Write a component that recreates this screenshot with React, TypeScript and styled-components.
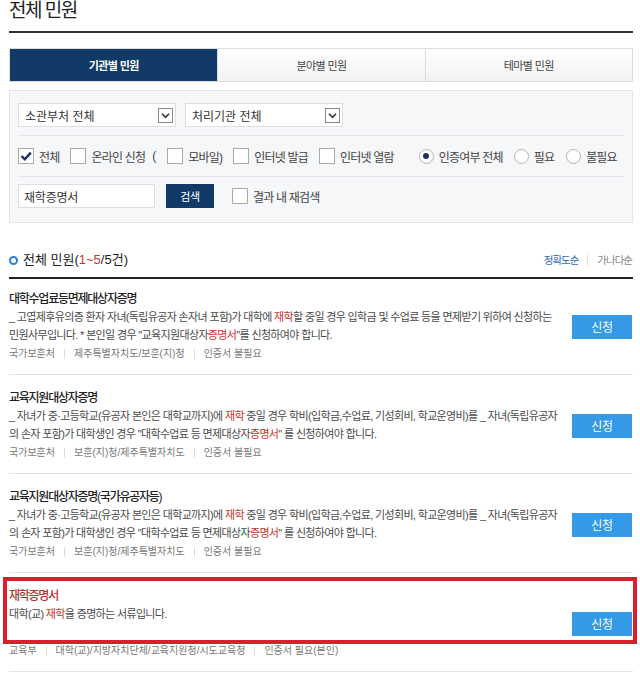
import React from 'react';
import styled, { createGlobalStyle } from 'styled-components';

const GlobalStyle = createGlobalStyle`
  html, body { margin: 0; padding: 0; background: #fff; }
  body { font-family: "Liberation Sans", "Noto Sans CJK KR", sans-serif; color: #333; }
  * { box-sizing: border-box; }
  ul { list-style: none; margin: 0; padding: 0; }
`;

const Page = styled.div`
  width: 624px;
  margin-left: 9px;
`;

const PageTitle = styled.h1`
  margin: 0;
  height: 33px;
  font-size: 19px;
  font-weight: 400;
  line-height: 21px;
  letter-spacing: -1.5px;
  color: #222;
  border-bottom: 2px solid #333;
`;

const Tabs = styled.div`
  margin-top: 15px;
  display: grid;
  grid-template-columns: repeat(3, 1fr);
  height: 34px;
  border: 1px solid #dcdcdc;
`;

const Tab = styled.div<{ $active?: boolean }>`
  display: flex;
  align-items: center;
  justify-content: center;
  font-size: 11px;
  letter-spacing: -0.6px;
  font-weight: ${(p) => (p.$active ? 700 : 400)};
  color: ${(p) => (p.$active ? '#fff' : '#444')};
  background: ${(p) => (p.$active ? '#113b66' : 'linear-gradient(#ffffff, #f2f2f2)')};
  & + & { border-left: 1px solid #dcdcdc; }
`;

const FilterBox = styled.div`
  margin-top: 8px;
  background: #f6f7f9;
  border: 1px solid #e3e5e8;
  padding: 0 8px;
`;

const FilterRow = styled.div<{ $pad: string; $height?: number }>`
  display: flex;
  align-items: center;
  padding: ${(p) => p.$pad};
  height: ${(p) => (p.$height ? `${p.$height}px` : 'auto')};
  & + & { border-top: 1px solid #e3e5e8; }
`;

const Select = styled.div`
  width: 158px;
  height: 24px;
  background: #fff;
  border: 1px solid #dedede;
  display: flex;
  align-items: center;
  justify-content: space-between;
  padding: 0 2px 0 6px;
  font-size: 12px;
  letter-spacing: 0;
  color: #333;
  & + & { margin-left: 9px; }
`;

const SelectArrow = styled.span`
  width: 15px;
  height: 15px;
  border: 1px solid #8a8a8a;
  background: #fff;
  display: flex;
  align-items: center;
  justify-content: center;
`;

const CheckGroup = styled.div`
  display: flex;
  align-items: center;
  gap: 11px;
`;

const CheckLabel = styled.label<{ $offset?: number }>`
  display: inline-flex;
  align-items: center;
  gap: 5px;
  font-size: 12px;
  letter-spacing: -0.8px;
  color: #444;
  margin-left: ${(p) => p.$offset ?? 0}px;
  white-space: nowrap;
`;

const Paren = styled.span`
  font-size: 12px;
  color: #444;
  margin-left: -4px;
`;

const Box = styled.span`
  width: 16px;
  height: 16px;
  border: 1px solid #a9a9a9;
  background: #fff;
  display: inline-flex;
  align-items: center;
  justify-content: center;
  flex: none;
`;

const Radio = styled.span<{ $on?: boolean }>`
  width: 15px;
  height: 15px;
  border: 1px solid #b3b3b3;
  border-radius: 50%;
  background: #fff;
  display: inline-flex;
  align-items: center;
  justify-content: center;
  flex: none;
  &::after {
    content: '';
    width: 6px;
    height: 6px;
    border-radius: 50%;
    background: ${(p) => (p.$on ? '#1d2d66' : 'transparent')};
  }
`;

const SearchInput = styled.div`
  width: 137px;
  height: 24px;
  background: #fff;
  border: 1px solid #dedede;
  display: flex;
  align-items: center;
  padding-left: 5px;
  font-size: 12px;
  letter-spacing: -0.2px;
  color: #333;
`;

const SearchButton = styled.button`
  margin-left: 11px;
  width: 48px;
  height: 24px;
  border: none;
  background: #113b66;
  color: #fff;
  font-family: inherit;
  font-size: 11px;
  letter-spacing: -0.3px;
  padding: 0;
`;

const SectionHeader = styled.div`
  margin-top: 28px;
  display: flex;
  justify-content: space-between;
  align-items: center;
  line-height: 18px;
  padding-bottom: 8px;
  border-bottom: 2px solid #222;
`;

const SectionTitle = styled.div`
  display: flex;
  align-items: center;
  font-size: 13px;
  letter-spacing: 0;
  color: #222;
`;

const Ring = styled.span`
  width: 9px;
  height: 9px;
  border-radius: 50%;
  border: 2.5px solid #2b7fd4;
  margin-right: 5px;
`;

const Red = styled.span`
  color: #c7352b;
`;

const Sort = styled.div`
  display: flex;
  align-items: center;
  font-size: 10.5px;
  letter-spacing: -1px;
  padding-right: 1px;
`;

const SortLink = styled.span<{ $active?: boolean }>`
  color: ${(p) => (p.$active ? '#2a6cb8' : '#888')};
`;

const Bar = styled.span`
  width: 1px;
  height: 10px;
  background: #dcdcdc;
  margin: 0 9px;
`;

const Item = styled.li`
  position: relative;
  display: grid;
  grid-template-columns: 1fr 60px;
  column-gap: 4px;
  align-items: center;
  padding: 14px 1px 11px 0;
  border-bottom: 1px solid #e3e3e3;
  &:first-child { padding-top: 11px; }
`;

const ItemTitle = styled.div<{ $hit?: boolean }>`
  font-size: 12px;
  font-weight: 500;
  letter-spacing: -1.25px;
  line-height: 18px;
  color: ${(p) => (p.$hit ? '#b3312c' : '#222')};
`;

const Desc = styled.div`
  font-size: 11px;
  letter-spacing: -0.65px;
  line-height: 18px;
  min-height: 36px;
  color: #4a4a4a;
  white-space: pre-line;
`;

const Meta = styled.div`
  margin-top: 1px;
  display: flex;
  align-items: center;
  font-size: 10px;
  letter-spacing: 0;
  line-height: 18px;
  color: #777;
`;

const ApplyButton = styled.button`
  width: 60px;
  height: 24px;
  border: none;
  background: #3499e6;
  color: #fff;
  font-family: inherit;
  font-size: 12px;
  letter-spacing: -0.3px;
  padding: 0;
`;

const Highlight = styled.div`
  position: absolute;
  top: 4px;
  left: -6px;
  right: -4px;
  height: 67px;
  border: 4px solid #d9202a;
  pointer-events: none;
`;

const CheckMark = () => (
  <svg width="14" height="14" viewBox="0 0 14 14">
    <path d="M2.5 7 L5.8 10.3 L11.8 3.6" fill="none" stroke="#1c2f5e" strokeWidth="2.4" />
  </svg>
);

const Chevron = () => (
  <svg width="11" height="11" viewBox="0 0 11 11">
    <path d="M2 3.8 L5.5 7.3 L9 3.8" fill="none" stroke="#333" strokeWidth="1.6" />
  </svg>
);

const Check = ({ label, checked, offset }: { label: string; checked?: boolean; offset?: number }) => (
  <CheckLabel $offset={offset}>
    <Box>{checked && <CheckMark />}</Box>
    {label}
  </CheckLabel>
);

const RadioItem = ({ label, on, offset }: { label: string; on?: boolean; offset?: number }) => (
  <CheckLabel $offset={offset}>
    <Radio $on={on} />
    {label}
  </CheckLabel>
);

const MetaLine = ({ parts }: { parts: string[] }) => (
  <Meta>
    {parts.map((p, i) => (
      <React.Fragment key={i}>
        {i > 0 && <Bar />}
        <span>{p}</span>
      </React.Fragment>
    ))}
  </Meta>
);

const HL = ({ children }: { children: React.ReactNode }) => <Red>{children}</Red>;

const descEdu = (
  <>
    _ 자녀가 중·고등학교(유공자 본인은 대학교까지)에 <HL>재학</HL> 중일 경우 학비(입학금,수업료, 기성회비, 학교운영비)를 _ 자녀(독립유공자{'\n'}의 손자 포함)가 대학생인 경우 "대학수업료 등 면제대상자<HL>증명서</HL>" 를 신청하여야 합니다.
  </>
);

const items = [
  {
    title: '대학수업료등면제대상자증명',
    desc: (
      <>
        _ 고엽제후유의증 환자 자녀(독립유공자 손자녀 포함)가 대학에 <HL>재학</HL>할 중일 경우 입학금 및 수업료 등을 면제받기 위하여 신청하는{'\n'}민원사무입니다. * 본인일 경우 "교육지원대상자<HL>증명서</HL>"를 신청하여야 합니다.
      </>
    ),
    meta: ['국가보훈처', '제주특별자치도/보훈(지)청', '인증서 불필요'],
  },
  {
    title: '교육지원대상자증명',
    desc: descEdu,
    meta: ['국가보훈처', '보훈(지)청/제주특별자치도', '인증서 불필요'],
  },
  {
    title: '교육지원대상자증명(국가유공자등)',
    desc: descEdu,
    meta: ['국가보훈처', '보훈(지)청/제주특별자치도', '인증서 불필요'],
  },
  {
    title: '재학증명서',
    hit: true,
    desc: (
      <>
        대학(교) <HL>재학</HL>을 증명하는 서류입니다.
      </>
    ),
    meta: ['교육부', '대학(교)/지방자치단체/교육지원청/시도교육청', '인증서 필요(본인)'],
  },
];

export default function App() {
  return (
    <>
      <GlobalStyle />
      <Page>
        <PageTitle>전체 민원</PageTitle>
        <Tabs>
          <Tab $active>기관별 민원</Tab>
          <Tab>분야별 민원</Tab>
          <Tab>테마별 민원</Tab>
        </Tabs>
        <FilterBox>
          <FilterRow $pad="12px 0 8px">
            <Select>
              소관부처 전체
              <SelectArrow>
                <Chevron />
              </SelectArrow>
            </Select>
            <Select>
              처리기관 전체
              <SelectArrow>
                <Chevron />
              </SelectArrow>
            </Select>
          </FilterRow>
          <FilterRow $pad="0" $height={41}>
            <CheckGroup>
              <Check label="전체" checked />
              <Check label="온라인 신청" />
              <Paren>(</Paren>
              <Check label="모바일)" />
              <Check label="인터넷 발급" />
              <Check label="인터넷 열람" />
              <RadioItem label="인증여부 전체" on offset={14} />
              <RadioItem label="필요" />
              <RadioItem label="불필요" offset={1} />
            </CheckGroup>
          </FilterRow>
          <FilterRow $pad="7px 0 14px">
            <SearchInput>재학증명서</SearchInput>
            <SearchButton>검색</SearchButton>
            <Check label="결과 내 재검색" offset={18} />
          </FilterRow>
        </FilterBox>
        <SectionHeader>
          <SectionTitle>
            <Ring />
            전체 민원(<Red>1~5</Red>/5건)
          </SectionTitle>
          <Sort>
            <SortLink $active>정확도순</SortLink>
            <Bar />
            <SortLink>가나다순</SortLink>
          </Sort>
        </SectionHeader>
        <ul>
          {items.map((it, i) => (
            <Item key={i}>
              <div>
                <ItemTitle $hit={it.hit}>{it.title}</ItemTitle>
                <Desc>{it.desc}</Desc>
                <MetaLine parts={it.meta} />
              </div>
              <ApplyButton>신청</ApplyButton>
              {it.hit && <Highlight />}
            </Item>
          ))}
        </ul>
      </Page>
    </>
  );
}
